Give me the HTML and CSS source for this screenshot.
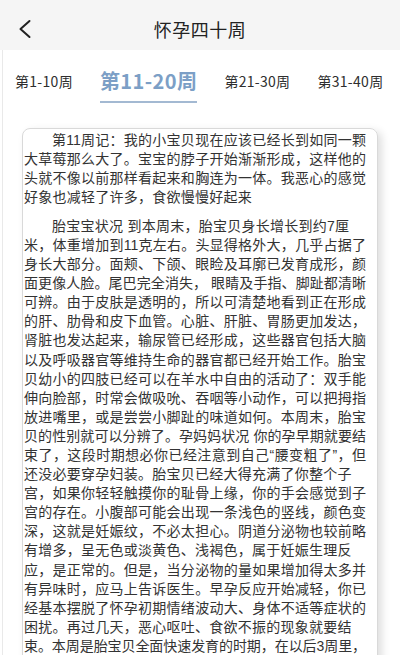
FILE: index.html
```html
<!DOCTYPE html>
<html lang="zh-CN">
<head>
<meta charset="utf-8">
<title>怀孕四十周</title>
<link rel="stylesheet" href="styles.css">
</head>
<body>
<div class="page">
  <header class="topbar">
    <span class="back" aria-label="返回">
      <svg width="14" height="20" viewBox="0 0 14 20"><polyline points="11.5,2 2.5,10 11.5,18" fill="none" stroke="#222" stroke-width="2" stroke-linecap="round" stroke-linejoin="round"/></svg>
    </span>
    <h1 class="title">怀孕四十周</h1>
    <span class="spacer"></span>
  </header>
  <main class="main">
    <nav class="tabs">
      <span class="tab">第1-10周</span>
      <span class="tab active">第11-20周</span>
      <span class="tab">第21-30周</span>
      <span class="tab">第31-40周</span>
    </nav>
    <article class="card">
      <p class="para">
        <span class="ln first">第11周记：我的小宝贝现在应该已经长到如同一颗</span>
        <span class="ln">大草莓那么大了。宝宝的脖子开始渐渐形成，这样他的</span>
        <span class="ln">头就不像以前那样看起来和胸连为一体。我恶心的感觉</span>
        <span class="ln end">好象也减轻了许多，食欲慢慢好起来</span>
      </p>
      <p class="para">
        <span class="ln first end">胎宝宝状况 到本周末，胎宝贝身长增长到约7厘</span>
        <span class="ln">米，体重增加到11克左右。头显得格外大，几乎占据了</span>
        <span class="ln">身长大部分。面颊、下颌、眼睑及耳廓已发育成形，颜</span>
        <span class="ln">面更像人脸。尾巴完全消失， 眼睛及手指、脚趾都清晰</span>
        <span class="ln">可辨。由于皮肤是透明的，所以可清楚地看到正在形成</span>
        <span class="ln">的肝、肋骨和皮下血管。心脏、肝脏、胃肠更加发达，</span>
        <span class="ln">肾脏也发达起来，输尿管已经形成，这些器官包括大脑</span>
        <span class="ln">以及呼吸器官等维持生命的器官都已经开始工作。胎宝</span>
        <span class="ln">贝幼小的四肢已经可以在羊水中自由的活动了：双手能</span>
        <span class="ln">伸向脸部，时常会做吸吮、吞咽等小动作，可以把拇指</span>
        <span class="ln">放进嘴里，或是尝尝小脚趾的味道如何。本周末，胎宝</span>
        <span class="ln">贝的性别就可以分辨了。孕妈妈状况 你的孕早期就要结</span>
        <span class="ln">束了，这段时期想必你已经注意到自己“腰变粗了”，但</span>
        <span class="ln end">还没必要穿孕妇装。胎宝贝已经大得充满了你整个子</span>
        <span class="ln">宫，如果你轻轻触摸你的耻骨上缘，你的手会感觉到子</span>
        <span class="ln">宫的存在。小腹部可能会出现一条浅色的竖线，颜色变</span>
        <span class="ln">深，这就是妊娠纹，不必太担心。阴道分泌物也较前略</span>
        <span class="ln end">有增多，呈无色或淡黄色、浅褐色，属于妊娠生理反</span>
        <span class="ln">应，是正常的。但是，当分泌物的量如果增加得太多并</span>
        <span class="ln">有异味时，应马上告诉医生。早孕反应开始减轻，你已</span>
        <span class="ln">经基本摆脱了怀孕初期情绪波动大、身体不适等症状的</span>
        <span class="ln end">困扰。再过几天，恶心呕吐、食欲不振的现象就要结</span>
        <span class="ln tight">束。本周是胎宝贝全面快速发育的时期，在以后3周里，</span>
      </p>
    </article>
  </main>
</div>
</body>
</html>
```

FILE: styles.css
```css
html, body {
  margin: 0;
  padding: 0;
  background: #ffffff;
}

body {
  width: 400px;
  height: 655px;
  overflow: hidden;
  font-family: "Noto Sans CJK SC", "Liberation Sans", sans-serif;
  color: #333333;
}

.page {
  width: 400px;
  height: 655px;
  overflow: hidden;
  display: flex;
  flex-direction: column;
}

.topbar {
  height: 50px;
  flex: none;
  background: #f5f5f5;
  display: grid;
  grid-template-columns: 50px 1fr 50px;
  align-items: center;
}

.back {
  display: flex;
  align-items: center;
  padding-left: 18px;
  padding-top: 7px;
  height: 20px;
}

.title {
  margin: 0;
  padding-top: 7px;
  text-align: center;
  font-size: 18px;
  font-weight: normal;
  letter-spacing: 0.5px;
  color: #222222;
  line-height: 24px;
}

.main {
  flex: 1;
  margin-left: 2px;
  border-left: 1px solid #e9e9e9;
  display: flex;
  flex-direction: column;
  min-height: 0;
}

.tabs {
  display: flex;
  align-items: flex-end;
  gap: 27px;
  padding-left: 12px;
  height: 78px;
  box-sizing: border-box;
  flex: none;
}

.tab {
  font-size: 14px;
  letter-spacing: 0.3px;
  line-height: 30px;
  padding-bottom: 5px;
  border-bottom: 2px solid transparent;
  color: #2e2e2e;
  white-space: nowrap;
  margin-bottom: 25px;
}

.tab.active {
  font-size: 20px;
  letter-spacing: 0.4px;
  font-weight: bold;
  color: #7c9fc6;
  border-bottom-color: #a3b9d2;
}

.card {
  margin-left: 19px;
  width: 342px;
  border: 1px solid #d9d9d9;
  border-radius: 8px;
  padding: 2px 11px 0 1px;
  box-shadow: 4px 3px 8px rgba(0, 0, 0, 0.13);
  flex: 1;
  font-family: "Liberation Sans", "Noto Sans CJK SC", sans-serif;
  font-size: 14px;
  color: #333333;
}

.para {
  margin: 0 0 9.5px 0;
  width: 342px;
}

.ln {
  display: block;
  line-height: 19.1px;
  text-align: justify;
  text-align-last: justify;
}

.ln.first {
  padding-left: 28px;
}

.ln.end {
  text-align-last: left;
  letter-spacing: 0.25px;
}

.ln.tight {
  letter-spacing: -0.1px;
}
```
